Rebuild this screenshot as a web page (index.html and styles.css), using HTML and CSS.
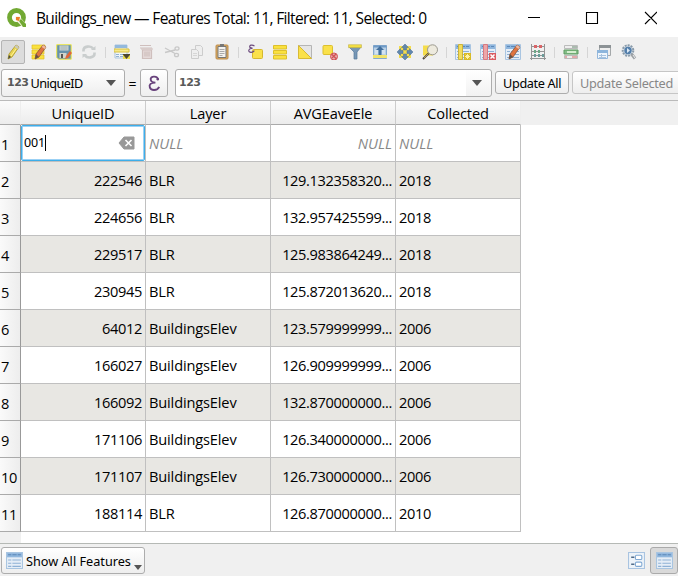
FILE: index.html
```html
<!DOCTYPE html>
<html lang="en">
<head>
<meta charset="utf-8">
<title>Buildings_new — Features</title>
<link rel="stylesheet" href="styles.css">
</head>
<body>
<svg class="defs" aria-hidden="true">
  <defs>
    <symbol id="pencil" viewBox="0 0 16 16"><path d="M11 1l3 2-7 10-4 2 1-5z" fill="#e9d451" stroke="#a89527" stroke-width=".8"/><path d="M11 1l3 2-1.5 2-3-2z" fill="#c9c8bc"/><path d="M4 11l2 2-3 2z" fill="#4c4c40"/><path d="M11 5l-5 7" stroke="#fff397"/></symbol>
    <symbol id="redpencil" viewBox="0 0 16 16"><path d="M12 1l3 2-7 10-4 2 1-5z" fill="#df7440" stroke="#87533a" stroke-width=".8"/><path d="M12 1l3 2-1.3 2-3-2z" fill="#edb8a0"/><path d="M5 10l3 3-4 2z" fill="#665244"/></symbol>
    <symbol id="table" viewBox="0 0 16 16"><path d="M.5.500h15v15H.5z" fill="#e6eef7" stroke="#a9c5e1"/><path d="M1 1h14v4H1z" fill="#8fb6dd"/><path d="M2 2.500h3m1 0h4m1 0h3" stroke="#5c88b8"/><path d="M2 7.500h3m1 0h8M2 10.500h3m1 0h8M2 13.500h3m1 0h8" stroke="#8fb1d5"/></symbol>
  </defs>
</svg>
<div class="window">
  <header class="titlebar">
    <svg class="logo" viewBox="0 0 20 20"><circle cx="9.500" cy="9.500" r="7" fill="none" stroke="#72a933" stroke-width="4.800"/><path d="M8.500 8.500h4l6.500 7.500v3h-3.500l-7-7z" fill="#f0f0d8"/><path d="M9 9h4l-1 4-3-1z" fill="#ee7d2a"/><path d="M12 13l2-2 5 5v3h-3z" fill="#72a933"/></svg>
    <h1 class="title">Buildings_new — Features Total: 11, Filtered: 11, Selected: 0</h1>
    <svg class="controls" viewBox="0 0 130 14"><path d="M1 6.500h12M59.500 1.500h11v11h-11zM118 1l12 12M130 1l-12 12" fill="none" stroke="#000" stroke-width="1.100"/></svg>
  </header>

  <nav class="toolbar">
    <span class="tool active"><svg viewBox="0 0 16 16"><use href="#pencil"/></svg></span>
    <span class="tool"><svg viewBox="0 0 16 16"><path d="M1 1h13v4H1zM1 6h12v4H1zM1 11h12v4H1z" fill="#fae13e" stroke="#dfbf27" stroke-width=".7"/><use href="#redpencil"/></svg></span>
    <span class="tool"><svg viewBox="0 0 16 16"><path d="M.7.700h14.500v14.500H2.500l-1.800-2z" fill="#6792ab" stroke="#f0e84b"/><path d="M3.500 1.500h9v5h-9z" fill="#cbd4d5"/><path d="M4.500 3h7m-7 2h7" stroke="#8d9c9f" stroke-width=".6"/><path d="M3.500 9h7v5h-7z" fill="#d2d4cc"/><path d="M5 10h2v4H5z" fill="#555"/><path d="M14 7l2 2-4 5-3 1 1-3z" fill="#e36638"/></svg></span>
    <span class="tool"><svg viewBox="0 0 16 16" fill="none" stroke="#c9cdcd" stroke-width="2.600"><path d="M2.500 7.500V6a5 3.500 0 0 1 9.500-1.500M13.500 8.500V10A5 3.500 0 0 1 4 11.500"/><path d="M10 6h4.500V2zM6 10H1.500v4z" fill="#c9cdcd" stroke="none"/></svg></span>
    <i class="sep first"></i>
    <span class="tool"><svg viewBox="0 0 16 16"><path d="M1 1h12v13H1z" fill="#f0f5f9" stroke="#abc5df"/><path d="M1 1h12v3H1z" fill="#94b9dc"/><path d="M0 5h15v3H0z" fill="#f6e98c" stroke="#d9c13d"/><path d="M2 10.500h3m1 0h4M2 12.500h3m1 0h4" stroke="#93b2d2"/><path d="M9 10h7v5H9z" fill="#eadb4d"/><path d="M8.500 10h8l-4 5z" fill="#4b4632"/></svg></span>
    <span class="tool"><svg viewBox="0 0 16 16" fill="none" stroke="#cfbfbd" stroke-width="1.200"><path d="M1 1.500h11M1 4h12"/><path d="M3.500 6h9v8.500h-9z" fill="#e4d9d8"/><path d="M6 7.500v5m2-5v5m2-5v5M2 5h12"/></svg></span>
    <span class="tool"><svg viewBox="0 0 16 16" fill="none" stroke="#c8c8c8" stroke-width="1.300"><path d="M1 4l10 5.500M1 8.500l10-2.500"/><ellipse cx="13" cy="4.500" rx="2" ry="1.700"/><ellipse cx="12.500" cy="11" rx="2" ry="1.700"/></svg></span>
    <span class="tool"><svg viewBox="0 0 16 16" fill="#eee" stroke="#ccc"><path d="M6.500 1.500h5l2 2v8h-7z"/><path d="M2.500 5.500h5l2 2v7h-7z"/><path d="M4 9.500h4m-4 2h4" stroke-width=".7"/></svg></span>
    <span class="tool"><svg viewBox="0 0 16 16"><rect x="2" y="1" width="12" height="14" rx="1" fill="#d8a961" stroke="#bd8d4d"/><path d="M4 2.500h8v11H4z" fill="#f3f2ef" stroke="#777"/><path d="M6 0h4v3H6z" fill="#777"/><path d="M5.500 5.500h5m-5 2h5m-5 2h5m-5 2h3" stroke="#aaa"/></svg></span>
    <i class="sep"></i>
    <span class="tool"><svg viewBox="0 0 16 16"><rect x="5.500" y="5.500" width="10" height="9" rx="1" fill="#fae14a" stroke="#d5b82f"/><path d="M7.500 2.200C5.500.2 2 1 2.800 3.200L5.500 4.300C1.500 4 .8 7.500 3 8.200c2 .5 3.500-.3 4.300-1.500" fill="none" stroke="#6c4b7e" stroke-width="1.200"/></svg></span>
    <span class="tool"><svg viewBox="0 0 16 16"><path d="M1.500 1.500h13v3.500h-13zM1.500 6.500h13V10h-13zM1.500 11.500h13V15h-13z" fill="#fae13e" stroke="#ddc02c"/></svg></span>
    <span class="tool"><svg viewBox="0 0 16 16"><path d="M1.500 1.500h13v13z" fill="#e5e5e5" stroke="#b5b5b5"/><path d="M1.500 1.500v13h13z" fill="#fae14a" stroke="#d8ba34"/></svg></span>
    <span class="tool"><svg viewBox="0 0 16 16"><rect x="1" y="1.500" width="9.500" height="9" rx="1" fill="#fae14a" stroke="#dcc02f"/><circle cx="12" cy="12.500" r="3.500" fill="#e8aaa9" stroke="#cf5155"/><path d="M9.500 10l5 5M10 14l4-4" stroke="#cf5155" stroke-width="1.200"/></svg></span>
    <span class="tool"><svg viewBox="0 0 16 16"><path d="M2 3h12L10 8v7H7V8z" fill="#7797b6" stroke="#55789c" stroke-width=".7"/><path d="M1.500.700h13v3h-13z" fill="#f4df43" stroke="#b9a842" stroke-width=".5"/></svg></span>
    <span class="tool"><svg viewBox="0 0 16 16"><path d="M1.500 1.500h13v13h-13z" fill="#b9d1e7" stroke="#85a9cd"/><path d="M1.500 1.500h13v2h-13z" fill="#6f9ac6"/><path d="M8 2l4 4H9.500v5h-3V6H4z" fill="#416f9e"/><path d="M3 7h3m4 0h3M3 9h3m4 0h3" stroke="#edf4fa"/><path d="M1 11h14v3H1z" fill="#f1e36b"/></svg></span>
    <span class="tool"><svg viewBox="0 0 16 16"><path d="M2 2h12v12H2z" fill="#f4dc4c"/><path d="M8 0l3.500 3.500h-2V6h-3V3.500h-2zM8 16l-3.500-3.500h2V10h3v2.500h2zM0 8l3.500-3.500v2H6v3H3.500v2zM16 8l-3.500 3.500v-2H10v-3h2.500v-2z" fill="#6187ae" stroke="#496d94" stroke-width=".5"/></svg></span>
    <span class="tool"><svg viewBox="0 0 16 16"><path d="M1 1.500h10v10H1z" fill="#f5dd4b"/><circle cx="10.500" cy="5.800" r="5" fill="#edeade" stroke="#9b998f"/><path d="M6.500 9.500l-5.500 5.500" stroke="#4d4844" stroke-width="2"/><path d="M6 10l-4 4" stroke="#dab85a" stroke-width=".8"/></svg></span>
    <i class="sep"></i>
    <span class="tool"><svg viewBox="0 0 16 16"><use href="#table"/><path d="M3.500.500h4v15h-4z" fill="#f2dc5d" stroke="#cdb438"/><path d="M9 9h7v7H9z" fill="#d8ba25"/><path d="M12.500 10v5M10 12.500h5M10.700 10.700l3.600 3.600m0-3.600l-3.600 3.600" stroke="#fff2a5"/></svg></span>
    <span class="tool"><svg viewBox="0 0 16 16"><use href="#table"/><path d="M3.500.500h4v15h-4z" fill="#eca6a9" stroke="#d77a80"/><path d="M9 9h7v7H9z" fill="#d95c62"/><path d="M10.500 10.500l4 4m0-4l-4 4" stroke="#fff" stroke-width="1.500"/></svg></span>
    <span class="tool"><svg viewBox="0 0 16 16"><use href="#table"/><use href="#redpencil"/></svg></span>
    <span class="tool"><svg viewBox="0 0 16 16" fill="none" stroke="#959595"><path d="M1.500 0v16M14.500 0v16M1 2.500h14M1 7.500h14M1 11.500h14M0 14.500h16"/><g stroke="none"><path d="M4 1h3v3H4zm5 0h3v3H9z" fill="#d96467"/><path d="M4 6h2v3H4zm4 0h2v3H8z" fill="#6da786"/><path d="M4 10h2v3H4zm4 0h2v3H8zm4 0h2v3h-2z" fill="#6b9c9a"/></g></svg></span>
    <i class="sep"></i>
    <span class="tool"><svg viewBox="0 0 16 16"><path d="M1.500 1.500h13v3h-13zM1.500 11.500h13v3h-13z" fill="#eee" stroke="#bbb"/><path d="M1 6h14v4H1z" fill="#84bc87" stroke="#5d9b61"/><path d="M9 3h5" stroke="#678970"/><path d="M4 8h9" stroke="#d4edcf" stroke-width="2"/><path d="M2 13h2m5 0h5" stroke="#d66367"/></svg></span>
    <i class="sep"></i>
    <span class="tool"><svg viewBox="0 0 16 16"><path d="M3.500 1.500h11v10h-11z" fill="#eee" stroke="#a4a8aa"/><path d="M3 1h12v3H3z" fill="#8c9295"/><path d="M1.500 6.500h10v8h-10z" fill="#eef5fc" stroke="#95b8dc"/><path d="M1 6h11v3H1z" fill="#8db5dc"/><path d="M3 11.500h7m-7 2h7M5.500 10v4" stroke="#a8c3df"/></svg></span>
    <span class="tool"><svg viewBox="0 0 16 16"><circle cx="7" cy="6.500" r="5.300" fill="#d4dee7" stroke="#899aa9" stroke-width="2" stroke-dasharray="2 1"/><circle cx="7" cy="6.500" r="3.700" fill="#547fab"/><path d="M6 4l3 2.500L6 9z" fill="#dce9f5"/><path d="M10.500 10l3.500 4.500" stroke="#9ca1a5" stroke-width="3"/><path d="M12 11l2 3" stroke="#eee"/></svg></span>
  </nav>

  <section class="fieldbar">
    <div class="combo field"><b class="num">123</b><span class="cap unique">UniqueID</span><i class="arrow"></i></div>
    <span class="equals">=</span>
    <div class="combo expression"><svg viewBox="0 0 16 20"><path d="M12 6C11 1 3 2 4 6c.2 2 2 3 5 3-5 0-7 2-6 5 1 4 8 4 10-.5" fill="none" stroke="#68427c" stroke-width="2"/><circle cx="11.500" cy="5.500" r="1.300" fill="#68427c"/></svg></div>
    <div class="combo value"><b class="num">123</b><i class="arrow"></i></div>
    <div class="combo update"><span class="cap">Update All</span></div>
    <div class="combo update selected"><span class="cap">Update Selected</span></div>
  </section>

  <main class="view">
    <table class="grid">
      <colgroup><col class="index"><col><col><col><col></colgroup>
      <thead><tr><th></th><th>UniqueID</th><th>Layer</th><th>AVGEaveEle</th><th>Collected</th></tr></thead>
      <tbody>
        <tr><th>1</th><td class="edit"><div class="editor"><span class="typed">001</span><svg viewBox="0 0 17 14"><path d="M6 1h10v12H6L1 7z" fill="#999" stroke="#999" stroke-linejoin="round"/><path d="M7.500 4l6 6m0-6l-6 6" stroke="#fff" stroke-width="1.600"/></svg></div></td><td class="null">NULL</td><td class="null">NULL</td><td class="null">NULL</td></tr>
        <tr><th>2</th><td>222546</td><td>BLR</td><td>129.132358320...</td><td>2018</td></tr>
        <tr><th>3</th><td>224656</td><td>BLR</td><td>132.957425599...</td><td>2018</td></tr>
        <tr><th>4</th><td>229517</td><td>BLR</td><td>125.983864249...</td><td>2018</td></tr>
        <tr><th>5</th><td>230945</td><td>BLR</td><td>125.872013620...</td><td>2018</td></tr>
        <tr><th>6</th><td>64012</td><td>BuildingsElev</td><td>123.579999999...</td><td>2006</td></tr>
        <tr><th>7</th><td>166027</td><td>BuildingsElev</td><td>126.909999999...</td><td>2006</td></tr>
        <tr><th>8</th><td>166092</td><td>BuildingsElev</td><td>132.870000000...</td><td>2006</td></tr>
        <tr><th>9</th><td>171106</td><td>BuildingsElev</td><td>126.340000000...</td><td>2006</td></tr>
        <tr><th>10</th><td>171107</td><td>BuildingsElev</td><td>126.730000000...</td><td>2006</td></tr>
        <tr><th>11</th><td>188114</td><td>BLR</td><td>126.870000000...</td><td>2010</td></tr>
      </tbody>
    </table>
    <div class="gutter"></div>
  </main>

  <footer class="footer">
    <div class="combo show"><svg viewBox="0 0 16 16"><use href="#table"/></svg><span class="cap">Show All Features</span><i class="arrow small"></i></div>
    <div class="modes">
      <span class="mode"><svg viewBox="0 0 16 16"><path d="M.5.500h15v15H.5z" fill="#edf3f9" stroke="#a9c4e1"/><rect x="7" y="3" width="6" height="4" rx="1" fill="#fff" stroke="#81a9d3"/><rect x="7" y="9.500" width="6" height="4" rx="1" fill="#fff" stroke="#81a9d3"/><path d="M3 5h3M3 11.500h3" stroke="#506c8b" stroke-width="1.300"/></svg></span>
      <span class="mode on"><svg viewBox="0 0 16 16"><use href="#table"/></svg></span>
    </div>
  </footer>
</div>
</body>
</html>
```
FILE: styles.css
```css
* { box-sizing: border-box; }
body { margin: 0; overflow: hidden; background: #fff; color: #000; font-family: "Open Sans", sans-serif; }
svg { display: block; flex: none; }
.defs { position: absolute; width: 0; height: 0; }
.window { width: 678px; height: 576px; display: flex; flex-direction: column; background: #f0f0f0; overflow: hidden; }

.titlebar { height: 37px; flex: none; display: flex; align-items: center; padding: 0 21px 1px 7px; background: #fff; }
.logo { width: 20px; height: 20px; }
.title { margin: 0 0 0 9px; font-size: 15.500px; line-height: 20px; font-weight: 400; white-space: nowrap; letter-spacing: -0.640px; }
.controls { width: 130px; height: 14px; margin-left: auto; }

.toolbar { height: 32px; flex: none; display: flex; align-items: center; padding: 0 0 2px 1px; }
.tool { width: 25px; height: 24px; flex: none; display: flex; align-items: center; justify-content: center; }
.tool svg { width: 16px; height: 16px; }
.tool.active { width: 24px; margin-right: 1px; border: 1px solid #b4b4b4; border-radius: 2px; background: #dcdcdc; }
.sep { width: 8px; height: 11px; flex: none; background: linear-gradient(#d5d5d5, #d5d5d5) center / 1px 100% no-repeat; }

.fieldbar { height: 31px; flex: none; display: flex; align-items: flex-start; padding-left: 1px; font-family: "Noto Sans", sans-serif; }
.combo { flex: none; display: flex; align-items: center; border: 1px solid #adadad; border-radius: 3px; background: linear-gradient(#fff, #eee); }
.field { width: 124px; height: 28px; padding: 0 8px 0 5px; }
.num { font: 700 11px/14px "DejaVu Sans", sans-serif; color: #595959; letter-spacing: -0.500px; padding-bottom: 1px; }
.cap { font: 400 12.700px/18px "Noto Sans", sans-serif; white-space: nowrap; }
.unique { margin-left: 2px; letter-spacing: -0.550px; }
.arrow { width: 0; height: 0; margin-left: auto; border: 5px solid transparent; border-top: 6px solid #555; border-bottom: 0; }
.equals { width: 15px; flex: none; font-size: 14px; line-height: 29px; text-align: center; }
.expression { width: 28px; height: 28px; justify-content: center; }
.expression svg { width: 15px; height: 19px; }
.value { width: 317px; height: 28px; margin-left: 7px; padding: 0 9px 0 3px; background: linear-gradient(#fff, #f2f2f2) right / 25px 100% no-repeat, #fff; }
.update { width: 74px; height: 23px; margin: 2px 0 0 3px; padding: 0 7px; letter-spacing: -0.350px; }
.selected { width: 112px; color: #888; border-color: #c6c6c6; letter-spacing: -0.280px; }

.view { flex: 1; border-top: 1px solid #bababa; display: flex; flex-direction: column; background: linear-gradient(#f0f0f0, #f0f0f0) top / 100% 24px no-repeat, #fff; }
.grid { width: 521px; table-layout: fixed; border-collapse: separate; border-spacing: 0; font-size: 14.600px; letter-spacing: -0.150px; }
.grid col { width: 125px; }
.grid col.index { width: 21px; }
.grid th, .grid td { height: 37px; padding: 0 3px; line-height: 18px; font-weight: 400; white-space: nowrap; text-align: left; border-right: 1px solid #c0c0c0; border-bottom: 1px solid #c0c0c0; }
.grid td { background: #fff; }
.grid tr:nth-child(even) td { background: #e8e7e3; }
.grid td:nth-child(2), .grid td:nth-child(4) { text-align: right; }
.grid td:nth-child(2), .grid td:nth-child(4), .grid td:nth-child(5) { letter-spacing: -0.350px; }
.grid thead th { height: 24px; padding: 0; text-align: center; border-right-color: #ccc; border-bottom-color: #aaa; background: linear-gradient(#fbfbfb, #ececec); }
.grid thead th:first-child, .grid thead th:last-child { border-right-color: #eee; }
.grid tbody th { padding: 2px 0 0 1px; letter-spacing: -0.350px; border-right-color: #999; border-bottom-color: #aaa; background: linear-gradient(90deg, #fafafa, #ededed); }
.grid td.null:nth-child(n) { font-style: italic; color: #888; letter-spacing: 0; }
.grid td.edit:nth-child(n) { padding: 0; }
.editor { height: 36px; display: flex; align-items: center; justify-content: space-between; padding: 0 9px 0 2px; border: 1px solid #3daee9; border-radius: 2px; box-shadow: inset 0 0 0 1px #9bd1f5; }
.editor svg { width: 17px; height: 14px; }
.typed { font: 400 12.500px/16px "Noto Sans", sans-serif; letter-spacing: -0.150px; border-right: 1px solid #000; }
.gutter { width: 21px; flex: 1; background: #f0f0f0; }

.footer { height: 33px; flex: none; display: flex; align-items: flex-start; justify-content: space-between; padding: 3px 0 0 1px; border-top: 1px solid #b5b9b5; }
.show { width: 144px; height: 27px; padding: 0 2px 0 4px; }
.show svg { width: 17px; height: 17px; margin-right: 3px; }
.arrow.small { border-width: 5px 4px 0; align-self: flex-end; margin-bottom: 3px; }
.modes { display: flex; }
.mode { width: 28px; height: 27px; display: flex; align-items: center; justify-content: center; }
.mode svg { width: 17px; height: 17px; }
.mode.on { border: 1px solid #aaa; border-radius: 3px; background: #d9d9d9; }
```
